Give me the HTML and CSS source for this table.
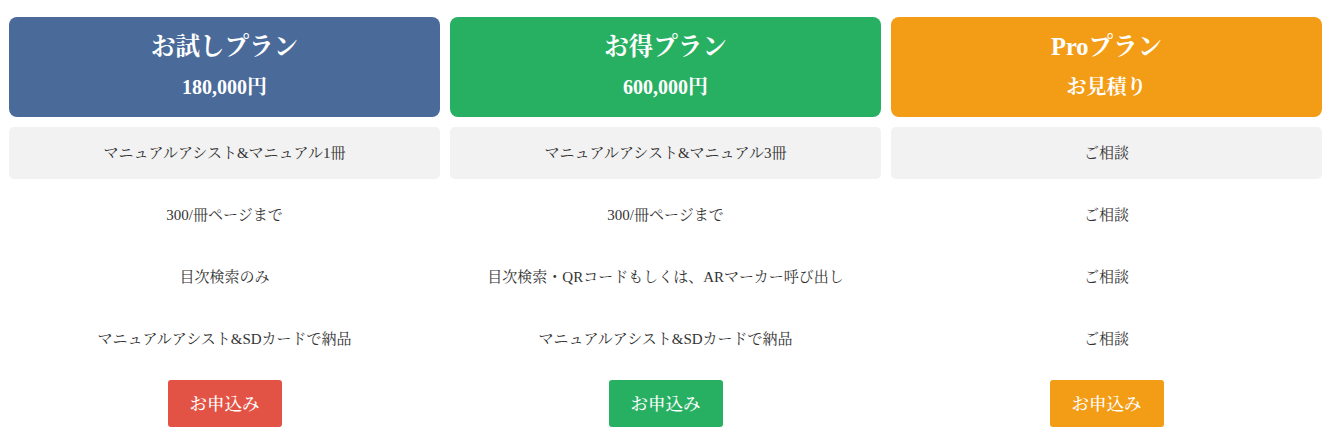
FILE: index.html
```html
<!DOCTYPE html>
<html lang="ja">
<head>
<meta charset="utf-8">
<title>プラン</title>
<link rel="stylesheet" href="styles.css">
</head>
<body>
<div class="plans">
  <div class="plan plan-blue">
    <div class="plan-head">
      <div class="plan-name">お試しプラン</div>
      <div class="plan-price">180,000円</div>
    </div>
    <div class="plan-row shaded">マニュアルアシスト&amp;マニュアル1冊</div>
    <div class="plan-row">300/冊ページまで</div>
    <div class="plan-row">目次検索のみ</div>
    <div class="plan-row">マニュアルアシスト&amp;SDカードで納品</div>
    <div class="plan-foot"><a class="btn btn-red" href="#">お申込み</a></div>
  </div>
  <div class="plan plan-green">
    <div class="plan-head">
      <div class="plan-name">お得プラン</div>
      <div class="plan-price">600,000円</div>
    </div>
    <div class="plan-row shaded">マニュアルアシスト&amp;マニュアル3冊</div>
    <div class="plan-row">300/冊ページまで</div>
    <div class="plan-row">目次検索・QRコードもしくは、ARマーカー呼び出し</div>
    <div class="plan-row">マニュアルアシスト&amp;SDカードで納品</div>
    <div class="plan-foot"><a class="btn btn-green" href="#">お申込み</a></div>
  </div>
  <div class="plan plan-orange">
    <div class="plan-head">
      <div class="plan-name">Proプラン</div>
      <div class="plan-price">お見積り</div>
    </div>
    <div class="plan-row shaded">ご相談</div>
    <div class="plan-row">ご相談</div>
    <div class="plan-row">ご相談</div>
    <div class="plan-row">ご相談</div>
    <div class="plan-foot"><a class="btn btn-orange" href="#">お申込み</a></div>
  </div>
</div>
</body>
</html>
```

FILE: styles.css
```css
* { box-sizing: border-box; }
html, body { margin: 0; padding: 0; background: #fff; }
body {
  font-family: "Liberation Serif", "Noto Serif CJK JP", "Noto Sans CJK JP", serif;
  color: #333;
}
.plans {
  display: flex;
  gap: 10px;
  padding: 17px 13px 0 9px;
}
.plan {
  width: 431px;
  display: flex;
  flex-direction: column;
  gap: 10px;
}
.plan-head {
  height: 100px;
  border-radius: 8px;
  color: #fff;
  font-weight: bold;
  text-align: center;
  display: flex;
  flex-direction: column;
  align-items: center;
  padding-top: 14px;
}
.plan-blue .plan-head { background: #4a6b99; }
.plan-green .plan-head { background: #28b062; }
.plan-orange .plan-head { background: #f39c16; }
.plan-name {
  font-size: 24.5px;
  line-height: 32px;
}
.plan-price {
  font-size: 20px;
  line-height: 28px;
  margin-top: 10px;
}
.plan-row {
  height: 52px;
  display: flex;
  align-items: center;
  justify-content: center;
  font-size: 15px;
  color: #333;
  border-radius: 5px;
  padding-bottom: 4px;
}
.plan-row.shaded { background: #f2f2f2; }
.plan-foot {
  display: flex;
  justify-content: center;
  padding-top: 5px;
}
.btn {
  display: flex;
  align-items: center;
  justify-content: center;
  width: 114px;
  height: 47px;
  border-radius: 3px;
  color: #fff;
  text-decoration: none;
  font-size: 17.5px;
  font-weight: 500;
  padding-bottom: 2px;
}
.btn-red { background: #e35345; }
.btn-green { background: #28b062; }
.btn-orange { background: #f39c16; }
```
